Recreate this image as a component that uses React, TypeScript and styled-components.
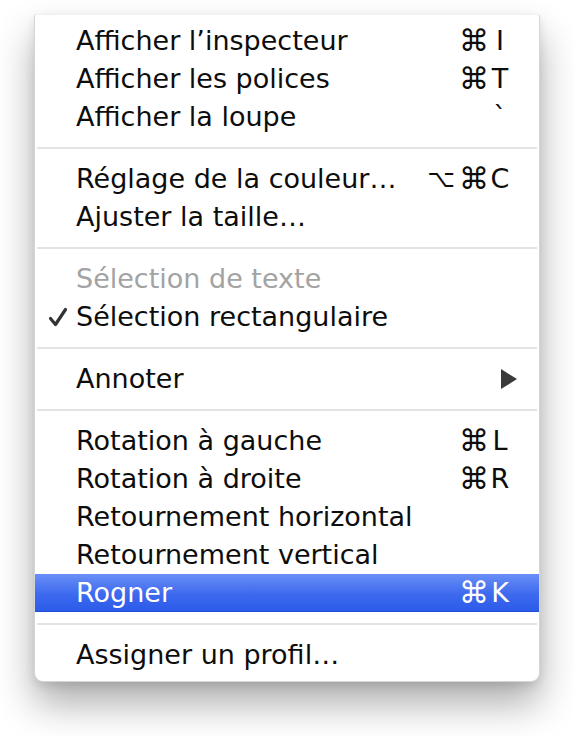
import styled, { createGlobalStyle, css } from 'styled-components';

const GlobalStyle = createGlobalStyle`
  html, body {
    margin: 0;
    background: #ffffff;
  }
`;

type Item = {
  label: string;
  mods?: string[];
  keyChar?: string;
  disabled?: boolean;
  checked?: boolean;
  submenu?: boolean;
  active?: boolean;
};

const sections: Item[][] = [
  [
    { label: 'Afficher l’inspecteur', mods: ['⌘'], keyChar: 'I' },
    { label: 'Afficher les polices', mods: ['⌘'], keyChar: 'T' },
    { label: 'Afficher la loupe', keyChar: '`' },
  ],
  [
    { label: 'Réglage de la couleur…', mods: ['⌥', '⌘'], keyChar: 'C' },
    { label: 'Ajuster la taille…' },
  ],
  [
    { label: 'Sélection de texte', disabled: true },
    { label: 'Sélection rectangulaire', checked: true },
  ],
  [{ label: 'Annoter', submenu: true }],
  [
    { label: 'Rotation à gauche', mods: ['⌘'], keyChar: 'L' },
    { label: 'Rotation à droite', mods: ['⌘'], keyChar: 'R' },
    { label: 'Retournement horizontal' },
    { label: 'Retournement vertical' },
    { label: 'Rogner', mods: ['⌘'], keyChar: 'K', active: true },
  ],
  [{ label: 'Assigner un profil…' }],
];

const Page = styled.div`
  padding: 14px 34px 60px 34px;
`;

const Menu = styled.div`
  width: 506px;
  box-sizing: border-box;
  background: #ffffff;
  padding: 7px 0 7px 0;
  border: 1px solid rgba(0, 0, 0, 0.16);
  border-top-color: rgba(0, 0, 0, 0.06);
  border-radius: 2px 2px 9px 9px;
  box-shadow: 0 22px 38px rgba(0, 0, 0, 0.32), 0 4px 10px rgba(0, 0, 0, 0.1);
  font-family: 'DejaVu Sans', 'Liberation Sans', sans-serif;
  font-size: 27px;
  color: #0d0d0d;
`;

const Separator = styled.div`
  height: 2px;
  margin: 11px 2px;
  background: #e3e3e3;
`;

const Row = styled.div<{ $active?: boolean; $disabled?: boolean }>`
  display: flex;
  align-items: center;
  height: 38px;
  padding-right: 28px;
  line-height: 38px;
  white-space: nowrap;
  color: ${(p) => (p.$disabled ? '#a3a3a3' : '#0d0d0d')};
  ${(p) =>
    p.$active &&
    css`
      color: #ffffff;
      background: linear-gradient(#6a8ff6, #3d69ee 55%, #2b5be9);
      border-bottom: 1px solid #1f4fd8;
      height: 37px;
    `}
`;

const CheckCol = styled.span`
  width: 41px;
  display: flex;
  justify-content: center;
  padding-left: 4px;
  box-sizing: border-box;
`;

const Label = styled.span`
  flex: 1;
`;

const Shortcut = styled.span`
  display: flex;
  align-items: center;
`;

const Mod = styled.span<{ $small?: boolean }>`
  font-size: ${(p) => (p.$small ? '24px' : '30px')};
  line-height: 38px;
  margin-left: 4px;
`;

const KeyChar = styled.span`
  width: 22px;
  text-align: center;
`;

const Arrow = styled.span`
  width: 0;
  height: 0;
  margin-right: -6px;
  border-top: 10px solid transparent;
  border-bottom: 10px solid transparent;
  border-left: 16px solid #3a3a3a;
`;

function Check() {
  return (
    <svg width="20" height="20" viewBox="0 0 20 20">
      <path
        d="M2.5 11.5 L7.5 17.5 L17.5 2.5"
        fill="none"
        stroke="#333333"
        strokeWidth="3.2"
        strokeLinecap="round"
        strokeLinejoin="round"
      />
    </svg>
  );
}

function MenuRow({ item }: { item: Item }) {
  return (
    <Row $active={item.active} $disabled={item.disabled}>
      <CheckCol>{item.checked && <Check />}</CheckCol>
      <Label>{item.label}</Label>
      {item.submenu && <Arrow />}
      {item.keyChar && (
        <Shortcut>
          {item.mods?.map((m) => (
            <Mod key={m} $small={m === '⌥'}>
              {m}
            </Mod>
          ))}
          <KeyChar>{item.keyChar}</KeyChar>
        </Shortcut>
      )}
    </Row>
  );
}

export default function App() {
  return (
    <>
      <GlobalStyle />
      <Page>
        <Menu>
          {sections.map((section, i) => (
            <div key={i}>
              {i > 0 && <Separator />}
              {section.map((item) => (
                <MenuRow key={item.label} item={item} />
              ))}
            </div>
          ))}
        </Menu>
      </Page>
    </>
  );
}
